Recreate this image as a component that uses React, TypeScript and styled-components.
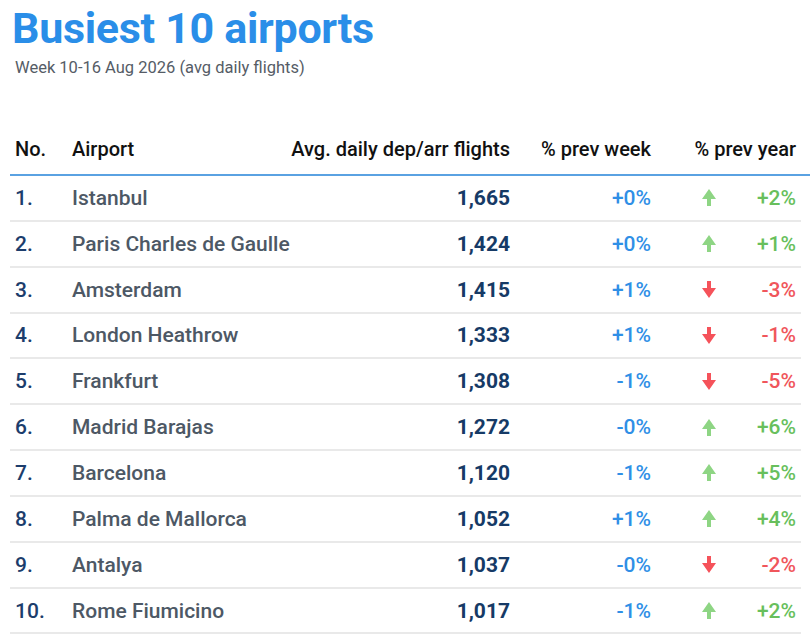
import React from "react";
import styled, { createGlobalStyle } from "styled-components";

const GlobalStyle = createGlobalStyle`
  body {
    margin: 0;
    background: #fff;
    font-family: Roboto, "Liberation Sans", sans-serif;
  }
`;

const Page = styled.div`
  width: 810px;
  height: 640px;
  overflow: hidden;
  padding-left: 10px;
  box-sizing: border-box;
`;

const Title = styled.h1`
  margin: 0;
  padding: 4px 0 0 2px;
  font-size: 43px;
  line-height: 48px;
  font-weight: 700;
  color: #2a8ee8;
  letter-spacing: -0.3px;
`;

const Subtitle = styled.p`
  margin: 6px 0 0 5px;
  font-size: 16.5px;
  line-height: 20px;
  color: #555c66;
`;

const Table = styled.div`
  margin-top: 52px;
`;

const Cols = styled.div`
  display: grid;
  grid-template-columns: 57px 258px 180px 141px 87px 58px;
  align-items: center;
  padding: 0 5px;
`;

const HeaderRow = styled(Cols)`
  height: 46px;
  width: 800px;
  box-sizing: border-box;
  padding-right: 14px;
  padding-bottom: 6px;
  grid-template-columns: 57px 258px 180px 141px 145px;
  border-bottom: 2px solid #5aa2e2;
  font-size: 20px;
  font-weight: 500;
  color: #111;
`;

const Row = styled(Cols)`
  height: 45.85px;
  width: 791px;
  box-sizing: border-box;
  border-bottom: 2px solid #e9e9e9;
  font-size: 21px;
  font-weight: 500;
`;

const Cell = styled.div<{ $right?: boolean }>`
  display: flex;
  justify-content: ${({ $right }) => ($right ? "flex-end" : "flex-start")};
  white-space: nowrap;
`;

const Rank = styled(Cell)`
  color: #1c3d6c;
`;

const Name = styled(Cell)`
  color: #4d5865;
`;

const Flights = styled(Cell)`
  color: #163a66;
  font-weight: 700;
`;

const Week = styled(Cell)`
  color: #2f8fe6;
`;

const ArrowCell = styled.div`
  display: flex;
  justify-content: flex-end;
  padding-right: 22px;
`;

const Year = styled(Cell)<{ $up: boolean }>`
  color: ${({ $up }) => ($up ? "#68bf5c" : "#f0565b")};
`;

const Arrow = ({ up }: { up: boolean }) =>
  up ? (
    <svg width="14" height="17" viewBox="0 0 14 17">
      <path d="M7 0 L14 10 L9 10 L9 17 L5 17 L5 10 L0 10 Z" fill="#8ed584" />
    </svg>
  ) : (
    <svg width="14" height="17" viewBox="0 0 14 17">
      <path d="M5 0 L9 0 L9 7 L14 7 L7 17 L0 7 L5 7 Z" fill="#f5525a" />
    </svg>
  );

const data = [
  ["Istanbul", "1,665", "+0%", "+2%"],
  ["Paris Charles de Gaulle", "1,424", "+0%", "+1%"],
  ["Amsterdam", "1,415", "+1%", "-3%"],
  ["London Heathrow", "1,333", "+1%", "-1%"],
  ["Frankfurt", "1,308", "-1%", "-5%"],
  ["Madrid Barajas", "1,272", "-0%", "+6%"],
  ["Barcelona", "1,120", "-1%", "+5%"],
  ["Palma de Mallorca", "1,052", "+1%", "+4%"],
  ["Antalya", "1,037", "-0%", "-2%"],
  ["Rome Fiumicino", "1,017", "-1%", "+2%"],
];

export default function App() {
  return (
    <Page>
      <GlobalStyle />
      <Title>Busiest 10 airports</Title>
      <Subtitle>Week 10-16 Aug 2026 (avg daily flights)</Subtitle>
      <Table>
        <HeaderRow>
          <Cell>No.</Cell>
          <Cell>Airport</Cell>
          <Cell $right>Avg. daily dep/arr flights</Cell>
          <Cell $right>% prev week</Cell>
          <Cell $right>% prev year</Cell>
        </HeaderRow>
        {data.map(([name, flights, week, year], i) => {
          const up = year.startsWith("+");
          return (
            <Row key={name}>
              <Rank>{i + 1}.</Rank>
              <Name>{name}</Name>
              <Flights $right>{flights}</Flights>
              <Week $right>{week}</Week>
              <ArrowCell>
                <Arrow up={up} />
              </ArrowCell>
              <Year $right $up={up}>
                {year}
              </Year>
            </Row>
          );
        })}
      </Table>
    </Page>
  );
}
